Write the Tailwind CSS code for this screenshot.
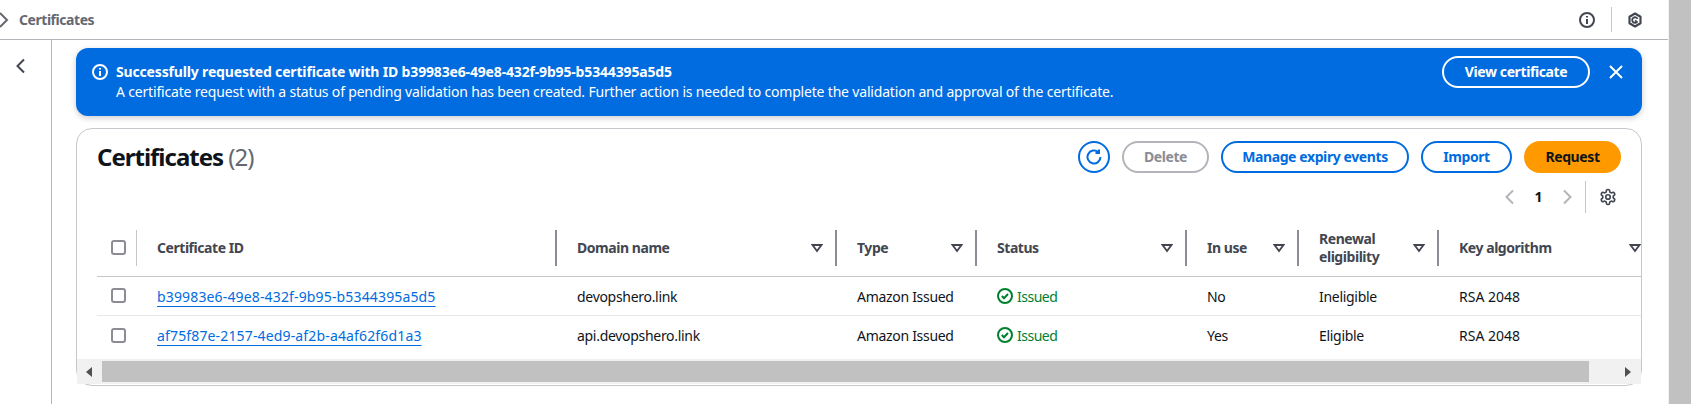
<!DOCTYPE html>
<html lang="en">
<head>
    <meta charset="UTF-8">
    <meta name="viewport" content="width=device-width, initial-scale=1.0">
    <title>Certificates</title>
    <script src="https://cdn.jsdelivr.net/npm/@tailwindcss/browser@4"></script>
</head>
<body class="bg-white overflow-hidden font-['Noto_Sans',sans-serif] text-[14px] leading-[20px] text-[#0f141a]">
<div class="flex h-[404px] w-[1691px]">
    <div class="w-[1668px] shrink-0">
        <!-- top bar -->
        <div class="h-[40px] border-b border-[#b4b4bb] flex items-center">
            <svg class="w-[16px] h-[16px] -ml-[4px] text-[#656871]" viewBox="0 0 16 16" fill="none" stroke="currentColor" stroke-width="2"><path d="M4 1l7 7-7 7"/></svg>
            <span class="ml-[7px] font-bold text-[#656871] tracking-[-0.45px]">Certificates</span>
            <div class="ml-auto flex items-center h-[25px] mr-[25px]">
                <svg class="w-[16px] h-[16px] text-[#424650]" viewBox="0 0 16 16" fill="none" stroke="currentColor" stroke-width="2"><circle cx="8" cy="8" r="7"/><path d="M8 7v5M8 4v1.6"/></svg>
                <div class="w-px h-[25px] bg-[#c6c6cd] ml-[16px] mr-[15px]"></div>
                <svg class="w-[16px] h-[16px] text-[#424650]" viewBox="0 0 16 16" fill="none" stroke="currentColor" stroke-width="2.2" stroke-linejoin="round"><path d="M8 1.500l5.500 3.200v6.600L8 14.500l-5.500-3.200V4.700z"/><path d="M10.500 6.800A2.800 2.800 0 1 0 10 10L8 8.500" stroke-width="1.800"/></svg>
            </div>
        </div>
        <div class="flex h-[364px]">
            <!-- side nav -->
            <div class="w-[52px] shrink-0 border-r border-[#b4b4bb] pt-[18px] pl-[13px]">
                <svg class="w-[16px] h-[16px] text-[#424650]" viewBox="0 0 16 16" fill="none" stroke="currentColor" stroke-width="2"><path d="M11 1.500L4.500 8l6.500 6.500"/></svg>
            </div>
            <div class="ml-[24px] w-[1566px] pt-[8px]">
                <!-- flash banner -->
                <div class="h-[68px] rounded-[12px] bg-[#006ce0] text-white flex shadow-[0_2px_6px_rgba(0,7,22,0.2)] pl-[16px] pr-[18px] pt-[8px]">
                    <svg class="w-[16px] h-[16px] mt-[8px] shrink-0" viewBox="0 0 16 16" fill="none" stroke="currentColor" stroke-width="2"><circle cx="8" cy="8" r="7"/><path d="M8 7v5M8 4v1.600"/></svg>
                    <div class="ml-[8px] pt-[6px]">
                        <div class="font-bold tracking-[-0.16px]">Successfully requested certificate with ID b39983e6-49e8-432f-9b95-b5344395a5d5</div>
                        <div class="tracking-[-0.18px]">A certificate request with a status of pending validation has been created. Further action is needed to complete the validation and approval of the certificate.</div>
                    </div>
                    <button class="ml-auto w-[148px] h-[32px] border-2 border-white rounded-full font-bold tracking-[-0.4px]">View certificate</button>
                    <svg class="w-[16px] h-[16px] mt-[8px] ml-[18px] shrink-0" viewBox="0 0 16 16" fill="none" stroke="currentColor" stroke-width="2"><path d="M2 2l12 12M14 2L2 14"/></svg>
                </div>
                <!-- table card -->
                <div class="mt-[12px] h-[258px] rounded-[16px] border border-[#c6c6cd]">
                    <div class="pt-[12px] pl-[20px] pr-[20px] flex items-start">
                        <h1 class="text-[24px] leading-[32px] font-bold tracking-[-1px]">Certificates <span class="font-normal text-[#656871]">(2)</span></h1>
                        <div class="ml-auto flex gap-[12px] font-bold tracking-[-0.4px]">
                            <button class="w-[32px] h-[32px] border-2 border-[#006ce0] rounded-full flex items-center justify-center">
                                <svg class="w-[16px] h-[16px] text-[#006ce0]" viewBox="0 0 16 16" fill="none" stroke="currentColor" stroke-width="2"><path d="M14.500 8a6.500 6.500 0 1 1-2.200-4.900"/><path d="M13 .500v3.500H9.500"/></svg>
                            </button>
                            <button class="w-[87px] h-[32px] border-2 border-[#b4b4bb] rounded-full text-[#8c8c94]">Delete</button>
                            <button class="w-[188px] h-[32px] border-2 border-[#006ce0] rounded-full text-[#006ce0]">Manage expiry events</button>
                            <button class="w-[91px] h-[32px] border-2 border-[#006ce0] rounded-full text-[#006ce0]">Import</button>
                            <button class="w-[97px] h-[32px] bg-[#ff9900] rounded-full">Request</button>
                        </div>
                    </div>
                    <!-- pagination -->
                    <div class="mt-[8px] h-[32px] pr-[24px] flex items-center justify-end">
                        <svg class="w-[16px] h-[16px] text-[#b4b4bb]" viewBox="0 0 16 16" fill="none" stroke="currentColor" stroke-width="2"><path d="M11 1.500L4.500 8l6.500 6.500"/></svg>
                        <span class="w-[41px] text-center font-bold">1</span>
                        <svg class="w-[16px] h-[16px] text-[#b4b4bb]" viewBox="0 0 16 16" fill="none" stroke="currentColor" stroke-width="2"><path d="M5 1.500L11.500 8 5 14.500"/></svg>
                        <div class="w-px h-[32px] bg-[#c6c6cd] ml-[10px] mr-[13px]"></div>
                        <svg class="w-[18px] h-[18px] text-[#424650]" viewBox="0 0 24 24" fill="none" stroke="currentColor" stroke-width="2.200"><path d="M12.220 2h-.44a2 2 0 0 0-2 2v.18a2 2 0 0 1-1 1.730l-.43.250a2 2 0 0 1-2 0l-.15-.08a2 2 0 0 0-2.730.730l-.22.380a2 2 0 0 0 .730 2.730l.15.100a2 2 0 0 1 1 1.720v.510a2 2 0 0 1-1 1.740l-.15.090a2 2 0 0 0-.730 2.730l.22.380a2 2 0 0 0 2.730.730l.15-.08a2 2 0 0 1 2 0l.43.250a2 2 0 0 1 1 1.730V20a2 2 0 0 0 2 2h.44a2 2 0 0 0 2-2v-.18a2 2 0 0 1 1-1.730l.43-.25a2 2 0 0 1 2 0l.15.08a2 2 0 0 0 2.730-.73l.22-.39a2 2 0 0 0-.73-2.730l-.15-.08a2 2 0 0 1-1-1.740v-.5a2 2 0 0 1 1-1.740l.15-.09a2 2 0 0 0 .73-2.730l-.22-.38a2 2 0 0 0-2.730-.73l-.15.08a2 2 0 0 1-2 0l-.43-.25a2 2 0 0 1-1-1.730V4a2 2 0 0 0-2-2z"/><circle cx="12" cy="12" r="3"/></svg>
                    </div>
                    <!-- table -->
                    <div class="mt-[7px] overflow-hidden pl-[20px]">
                        <table class="table-fixed w-[1558px] text-left">
                            <colgroup>
                                <col class="w-[40px]"><col class="w-[420px]"><col class="w-[280px]"><col class="w-[140px]"><col class="w-[210px]"><col class="w-[112px]"><col class="w-[140px]"><col class="w-[216px]">
                            </colgroup>
                            <thead>
                                <tr class="h-[56px] text-[#424650] font-bold tracking-[-0.45px]">
                                    <th class="border-b border-[#c6c6cd] p-0"><div class="h-[36px] border-r border-[#c6c6cd] pl-[14px] flex items-center"><span class="w-[15px] h-[15px] rounded-[3px] border-2 border-[#8c8c94]"></span></div></th>
                                    <th class="border-b border-[#c6c6cd] p-0"><div class="h-[36px] border-r-2 border-[#8c8c94] pl-[20px] flex items-center">Certificate ID</div></th>
                                    <th class="border-b border-[#c6c6cd] p-0"><div class="h-[36px] border-r-2 border-[#8c8c94] pl-[20px] pr-[12px] flex items-center justify-between">Domain name<svg class="w-[12px] h-[12px] text-[#424650]" viewBox="0 0 16 16" fill="none" stroke="currentColor" stroke-width="2.500"><path d="M2 4h12l-6 8z"/></svg></div></th>
                                    <th class="border-b border-[#c6c6cd] p-0"><div class="h-[36px] border-r-2 border-[#8c8c94] pl-[20px] pr-[12px] flex items-center justify-between">Type<svg class="w-[12px] h-[12px] text-[#424650]" viewBox="0 0 16 16" fill="none" stroke="currentColor" stroke-width="2.500"><path d="M2 4h12l-6 8z"/></svg></div></th>
                                    <th class="border-b border-[#c6c6cd] p-0"><div class="h-[36px] border-r-2 border-[#8c8c94] pl-[20px] pr-[12px] flex items-center justify-between">Status<svg class="w-[12px] h-[12px] text-[#424650]" viewBox="0 0 16 16" fill="none" stroke="currentColor" stroke-width="2.500"><path d="M2 4h12l-6 8z"/></svg></div></th>
                                    <th class="border-b border-[#c6c6cd] p-0"><div class="h-[36px] border-r-2 border-[#8c8c94] pl-[20px] pr-[12px] flex items-center justify-between">In use<svg class="w-[12px] h-[12px] text-[#424650]" viewBox="0 0 16 16" fill="none" stroke="currentColor" stroke-width="2.500"><path d="M2 4h12l-6 8z"/></svg></div></th>
                                    <th class="border-b border-[#c6c6cd] p-0"><div class="h-[36px] border-r-2 border-[#8c8c94] pl-[20px] pr-[12px] flex items-center justify-between leading-[18px]"><span>Renewal<br>eligibility</span><svg class="w-[12px] h-[12px] text-[#424650]" viewBox="0 0 16 16" fill="none" stroke="currentColor" stroke-width="2.500"><path d="M2 4h12l-6 8z"/></svg></div></th>
                                    <th class="border-b border-[#c6c6cd] p-0"><div class="h-[36px] pl-[20px] pr-[14px] flex items-center justify-between">Key algorithm<svg class="w-[12px] h-[12px] text-[#424650]" viewBox="0 0 16 16" fill="none" stroke="currentColor" stroke-width="2.500"><path d="M2 4h12l-6 8z"/></svg></div></th>
                                </tr>
                            </thead>
                            <tbody class="tracking-[-0.3px]">
                                <tr class="h-[39px] border-b border-[#e8e8ea]">
                                    <td class="p-0 pl-[14px]"><div class="w-[15px] h-[15px] rounded-[3px] border-2 border-[#8c8c94]"></div></td>
                                    <td class="p-0 pt-[2px] pl-[20px]"><a class="text-[#006ce0] underline underline-offset-[4px] tracking-[0.15px]" href="#">b39983e6-49e8-432f-9b95-b5344395a5d5</a></td>
                                    <td class="p-0 pt-[2px] pl-[20px]">devopshero.link</td>
                                    <td class="p-0 pt-[2px] pl-[20px]">Amazon Issued</td>
                                    <td class="p-0 pl-[20px]"><div class="flex items-center gap-[4px] text-[#00802f] tracking-[-0.5px]"><svg class="w-[16px] h-[16px]" viewBox="0 0 16 16" fill="none" stroke="currentColor" stroke-width="2"><circle cx="8" cy="8" r="7"/><path d="M4.800 8l2.200 2.200 4-4.200"/></svg><span class="pt-[2px]">Issued</span></div></td>
                                    <td class="p-0 pt-[2px] pl-[20px]">No</td>
                                    <td class="p-0 pt-[2px] pl-[20px]">Ineligible</td>
                                    <td class="p-0 pt-[2px] pl-[20px] tracking-normal">RSA 2048</td>
                                </tr>
                                <tr class="h-[40px]">
                                    <td class="p-0 pl-[14px]"><div class="w-[15px] h-[15px] rounded-[3px] border-2 border-[#8c8c94]"></div></td>
                                    <td class="p-0 pt-[2px] pl-[20px]"><a class="text-[#006ce0] underline underline-offset-[4px] tracking-[0.15px]" href="#">af75f87e-2157-4ed9-af2b-a4af62f6d1a3</a></td>
                                    <td class="p-0 pt-[2px] pl-[20px]">api.devopshero.link</td>
                                    <td class="p-0 pt-[2px] pl-[20px]">Amazon Issued</td>
                                    <td class="p-0 pl-[20px]"><div class="flex items-center gap-[4px] text-[#00802f] tracking-[-0.5px]"><svg class="w-[16px] h-[16px]" viewBox="0 0 16 16" fill="none" stroke="currentColor" stroke-width="2"><circle cx="8" cy="8" r="7"/><path d="M4.800 8l2.200 2.200 4-4.200"/></svg><span class="pt-[2px]">Issued</span></div></td>
                                    <td class="p-0 pt-[2px] pl-[20px]">Yes</td>
                                    <td class="p-0 pt-[2px] pl-[20px]">Eligible</td>
                                    <td class="p-0 pt-[2px] pl-[20px] tracking-normal">RSA 2048</td>
                                </tr>
                            </tbody>
                        </table>
                    </div>
                    <!-- horizontal scrollbar -->
                    <div class="mt-[4px] h-[25px] bg-[#f1f1f1] flex items-center w-[1564px]">
                        <svg class="w-[6px] h-[10px] ml-[9px] text-[#505050]" viewBox="0 0 6 10" fill="currentColor"><path d="M6 0v10L0 5z"/></svg>
                        <div class="ml-[10px] w-[1487px] h-[21px] bg-[#c1c1c1]"></div>
                        <svg class="w-[6px] h-[10px] ml-[36px] text-[#505050]" viewBox="0 0 6 10" fill="currentColor"><path d="M0 0v10l6-5z"/></svg>
                    </div>
                </div>
            </div>
        </div>
    </div>
    <!-- page scrollbar -->
    <div class="w-[23px] h-[404px] bg-[#c1c1c1] border-l border-[#f1f1f1]"></div>
</div>
</body>
</html>
